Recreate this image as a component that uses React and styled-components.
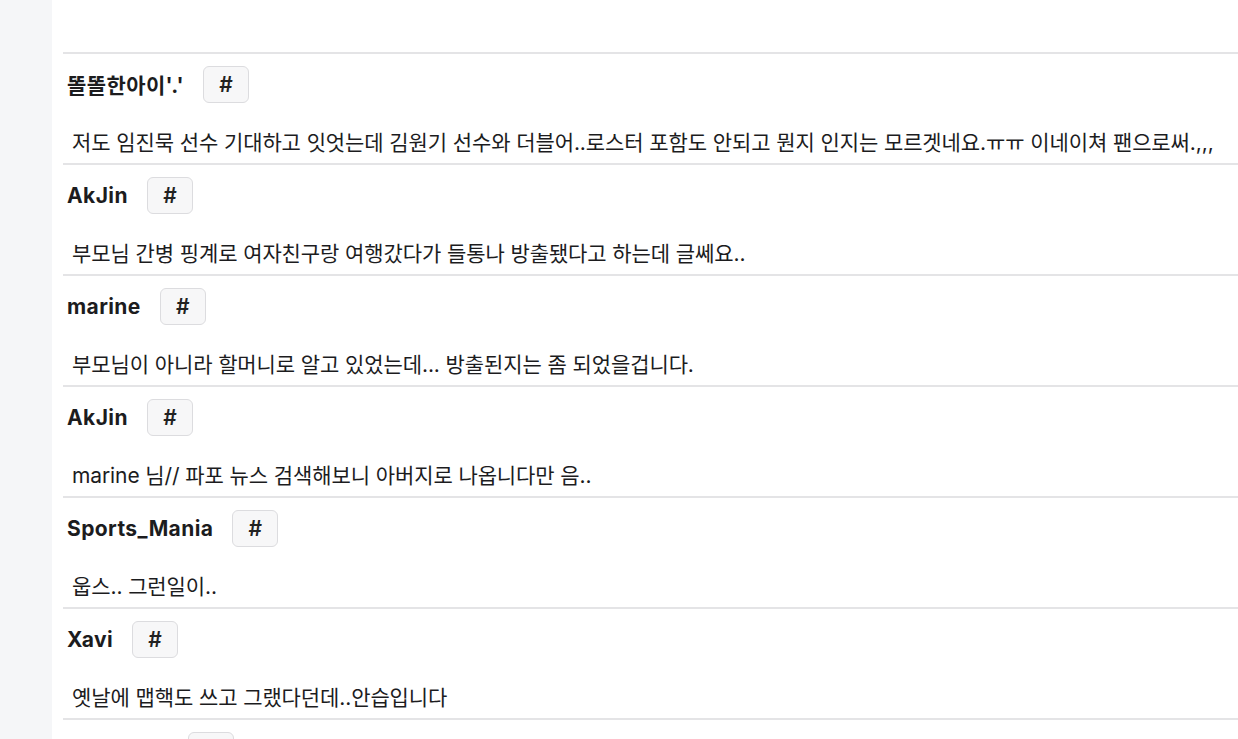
import React from 'react'
import styled, { createGlobalStyle } from 'styled-components'

const GlobalStyle = createGlobalStyle`
  html, body {
    margin: 0;
    padding: 0;
    background: #ffffff;
    overflow: hidden;
  }
  body {
    font-family: Inter, "Noto Sans CJK KR", sans-serif;
    color: #1c1c1e;
  }
`

const Page = styled.div`
  display: flex;
  width: 1238px;
  height: 739px;
  overflow: hidden;
`

const Sidebar = styled.div`
  flex: 0 0 52px;
  background: #f5f6f8;
`

const Main = styled.div`
  flex: 1;
  padding: 52px 0 0 11px;
  min-width: 0;
`

const List = styled.ul`
  list-style: none;
  margin: 0;
  padding: 0;
`

const Item = styled.li`
  border-top: 2px solid #e4e4e6;
  padding: 12px 0 7px 4px;
`

const Header = styled.div`
  display: flex;
  align-items: center;
  gap: 19px;
  height: 37px;
`

const Name = styled.span`
  font-size: 21px;
  font-weight: 700;
  letter-spacing: 0.4px;
  white-space: nowrap;
  margin-top: -1px;
`

const HashButton = styled.button`
  width: 46px;
  height: 37px;
  padding: 0;
  border: 1px solid #dcdcdf;
  border-radius: 6px;
  background: #f7f7f8;
  color: #222;
  font-family: Inter, sans-serif;
  font-size: 21px;
  font-weight: 600;
  line-height: 1;
  cursor: pointer;
`

const Comment = styled.p`
  margin: 25px 0 -2px;
  padding-left: 5px;
  font-size: 21px;
  letter-spacing: -0.1px;
  line-height: 30px;
  white-space: nowrap;
`

const comments = [
  { name: "똘똘한아이'.'", text: '저도 임진묵 선수 기대하고 잇엇는데 김원기 선수와 더블어..로스터 포함도 안되고 뭔지 인지는 모르겟네요.ㅠㅠ 이네이쳐 팬으로써.,,,' },
  { name: 'AkJin', text: '부모님 간병 핑계로 여자친구랑 여행갔다가 들통나 방출됐다고 하는데 글쎄요..' },
  { name: 'marine', text: '부모님이 아니라 할머니로 알고 있었는데... 방출된지는 좀 되었을겁니다.' },
  { name: 'AkJin', text: 'marine 님// 파포 뉴스 검색해보니 아버지로 나옵니다만 음..' },
  { name: 'Sports_Mania', text: '웁스.. 그런일이..' },
  { name: 'Xavi', text: '옛날에 맵핵도 쓰고 그랬다던데..안습입니다' },
  { name: 'Kimchi99', text: '그래도 다시 돌아왔으면 좋겠네요' },
]

const App = () => (
  <Page>
    <GlobalStyle />
    <Sidebar />
    <Main>
      <List>
        {comments.map((c, i) => (
          <Item key={i}>
            <Header>
              <Name>{c.name}</Name>
              <HashButton>#</HashButton>
            </Header>
            <Comment>{c.text}</Comment>
          </Item>
        ))}
      </List>
    </Main>
  </Page>
)

export default App
